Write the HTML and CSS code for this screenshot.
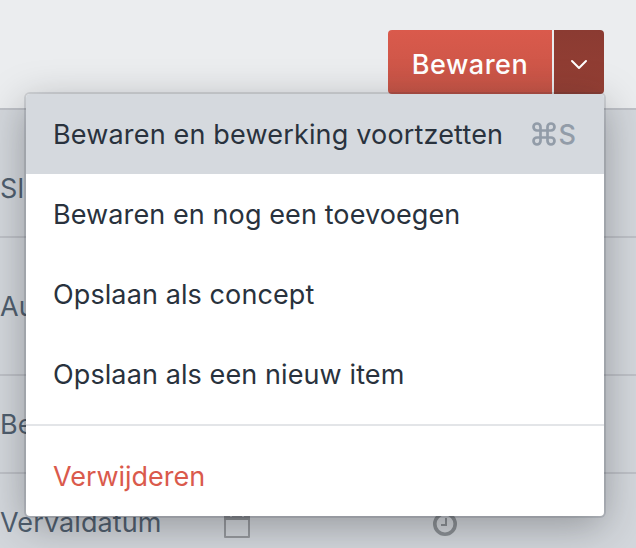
FILE: index.html
```html
<!DOCTYPE html>
<html lang="nl">
    <head>
        <meta charset="UTF-8">
        <title>Bewaren</title>
        <link rel="stylesheet" href="styles.css">
    </head>
    <body>
        <div class="header">
            <div class="btngroup">
                <button class="btn submit">Bewaren</button>
                <button class="btn menubtn" aria-label="Menu">
                    <svg width="18" height="12" viewBox="0 0 18 12"><path d="M2 3l7 7 7-7"/></svg>
                </button>
            </div>
        </div>
        <div class="meta">
            <div class="field slug">Sl</div>
            <div class="field author">Au</div>
            <div class="field date">Be</div>
            <div class="field expiry">
                <span class="label">Vervaldatum</span>
                <svg class="calendar" width="26" height="30" viewBox="0 0 26 30"><path class="line" d="M1 5h24v23h-24z"/><path class="fill" d="M0 4h26v7h-26z"/><path class="rings" d="M7 3v5M19 3v5"/></svg>
                <svg class="clock" width="24" height="24" viewBox="0 0 24 24"><circle cx="12" cy="12" r="10.200"/><path d="M13 6v7h-5"/></svg>
            </div>
        </div>
        <div class="menu">
            <ul>
                <li class="sel"><span class="first">Bewaren en bewerking voortzetten</span><span class="shortcut"><svg width="24" height="24" viewBox="0 0 24 24"><path d="M8.500 8.500V5A3.500 3.500 0 1 0 5 8.500H19A3.500 3.500 0 1 0 15.500 5V19A3.500 3.500 0 1 0 19 15.500H5A3.500 3.500 0 1 0 8.500 19Z"/></svg>S</span></li>
                <li>Bewaren en nog een toevoegen</li>
                <li>Opslaan als concept</li>
                <li>Opslaan als een nieuw item</li>
            </ul>
            <hr>
            <ul>
                <li class="error">Verwijderen</li>
            </ul>
        </div>
    </body>
</html>
```

FILE: styles.css
```css
* { box-sizing: border-box; margin: 0; padding: 0; }
html, body { height: 100%; overflow: hidden; }
body { position: relative; background: #d3d7dc; color: #29323d; font-family: Inter, "Liberation Sans", sans-serif; font-size: 27px; }
ul { list-style-type: none; }
svg { display: block; fill: none; }

.header { height: 110px; padding: 30px 32px 0 0; background: #ebedef; border-bottom: 2px solid #bec1c7; }
.btngroup { display: flex; justify-content: flex-end; gap: 2px; }
.btn { display: flex; align-items: center; justify-content: center; height: 64px; padding-top: 4px; border: 0; color: #fff; font: inherit; }
.submit { width: 164px; border-radius: 4px 0 0 4px; background: linear-gradient(#da5a4c, #c65446); font-weight: 500; letter-spacing: 0.5px; }
.menubtn { width: 50px; border-radius: 0 4px 4px 0; background: linear-gradient(#8b3b32, #953f34); }
.menubtn svg { stroke: #fff; stroke-width: 2; stroke-linecap: round; stroke-linejoin: round; }

/* fields behind the menu */
.meta { color: #4f5e6e; letter-spacing: 0.1px; }
.field { display: flex; align-items: center; border-bottom: 2px solid #bec1c7; }
.slug { height: 128px; padding-top: 30px; }
.author { height: 138px; }
.date { height: 98px; }
.expiry { height: 96px; border-bottom: 0; }
.label { width: 224px; }
.calendar { margin-top: 3px; }
.calendar .line { stroke: #96999e; stroke-width: 2; stroke-linejoin: round; }
.calendar .fill { fill: #8c9095; }
.calendar .rings { stroke: #c3c6ca; stroke-width: 2; }
.clock { margin: 3px 0 0 183px; stroke: #8a8f94; stroke-width: 3.600; }
.clock path { stroke-width: 2; }

.menu { position: absolute; top: 94px; left: 26px; width: 578px; height: 422px; border-radius: 4px; background: #fff; overflow: hidden; box-shadow: 0 0 0 2px rgba(31, 41, 51, 0.13), 0 10px 40px rgba(31, 31, 35, 0.35); }
.menu li { display: flex; align-items: center; justify-content: space-between; height: 80px; padding: 0 28px 0 27px; letter-spacing: 0.1px; white-space: nowrap; }
.menu .sel { background: #d5d9de; }
.menu .first { letter-spacing: 0.17px; }
.menu hr { height: 2px; margin: 10px 0; border: 0; background: #e3e5e8; }
.menu .error { color: #da5a4c; letter-spacing: 0; }
.shortcut { display: flex; align-items: center; gap: 2px; color: #929ca8; font-weight: 500; }
.shortcut svg { stroke: #929ca8; stroke-width: 2.700; }
```
